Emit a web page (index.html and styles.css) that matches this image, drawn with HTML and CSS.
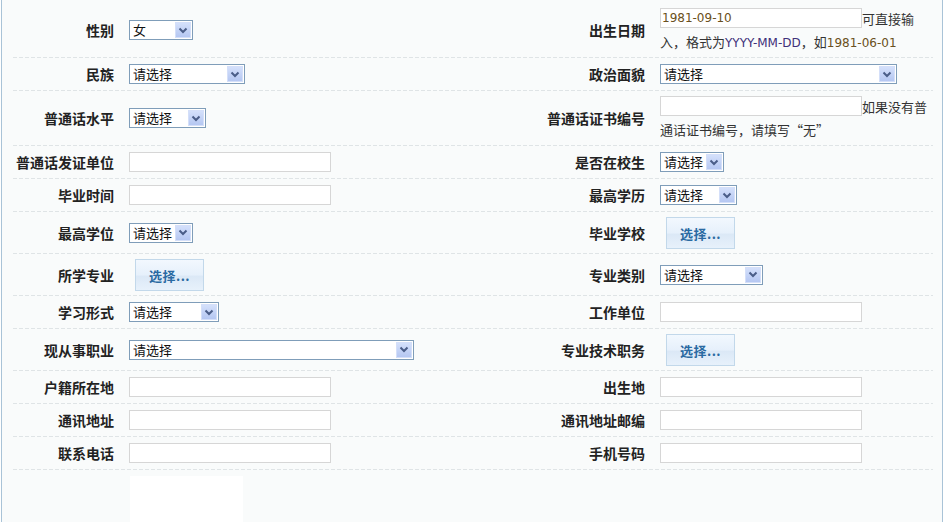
FILE: index.html
```html
<!DOCTYPE html>
<html lang="zh-CN">
<head>
<meta charset="utf-8">
<title>个人信息</title>
<link rel="stylesheet" href="styles.css">
</head>
<body>
<div class="page">
  <div class="form">
    <div class="row">
      <div class="lab">性别</div>
      <div class="fld"><span class="sel w64"><span class="sel-val">女</span><span class="sel-btn"><svg width="10" height="7" viewBox="0 0 10 7"><path d="M1.5 1.5 L5 5 L8.5 1.5" fill="none" stroke="#4a5d88" stroke-width="2"/></svg></span></span></div>
      <div class="lab">出生日期</div>
      <div class="fld hint"><input class="txt date" type="text" value="1981-09-10">可直接输入，格式为<span class="num ym">YYYY-MM-DD</span>，如<span class="num dg">1981-06-01</span></div>
    </div>
    <div class="row">
      <div class="lab">民族</div>
      <div class="fld"><span class="sel w116"><span class="sel-val">请选择</span><span class="sel-btn"><svg width="10" height="7" viewBox="0 0 10 7"><path d="M1.5 1.5 L5 5 L8.5 1.5" fill="none" stroke="#4a5d88" stroke-width="2"/></svg></span></span></div>
      <div class="lab">政治面貌</div>
      <div class="fld"><span class="sel w237"><span class="sel-val">请选择</span><span class="sel-btn"><svg width="10" height="7" viewBox="0 0 10 7"><path d="M1.5 1.5 L5 5 L8.5 1.5" fill="none" stroke="#4a5d88" stroke-width="2"/></svg></span></span></div>
    </div>
    <div class="row">
      <div class="lab">普通话水平</div>
      <div class="fld"><span class="sel w77"><span class="sel-val">请选择</span><span class="sel-btn"><svg width="10" height="7" viewBox="0 0 10 7"><path d="M1.5 1.5 L5 5 L8.5 1.5" fill="none" stroke="#4a5d88" stroke-width="2"/></svg></span></span></div>
      <div class="lab">普通话证书编号</div>
      <div class="fld hint"><input class="txt" type="text" value="">如果没有普通话证书编号，请填写“无”</div>
    </div>
    <div class="row">
      <div class="lab">普通话发证单位</div>
      <div class="fld"><input class="txt" type="text" value=""></div>
      <div class="lab">是否在校生</div>
      <div class="fld"><span class="sel w64"><span class="sel-val">请选择</span><span class="sel-btn"><svg width="10" height="7" viewBox="0 0 10 7"><path d="M1.5 1.5 L5 5 L8.5 1.5" fill="none" stroke="#4a5d88" stroke-width="2"/></svg></span></span></div>
    </div>
    <div class="row">
      <div class="lab">毕业时间</div>
      <div class="fld"><input class="txt" type="text" value=""></div>
      <div class="lab">最高学历</div>
      <div class="fld"><span class="sel w77"><span class="sel-val">请选择</span><span class="sel-btn"><svg width="10" height="7" viewBox="0 0 10 7"><path d="M1.5 1.5 L5 5 L8.5 1.5" fill="none" stroke="#4a5d88" stroke-width="2"/></svg></span></span></div>
    </div>
    <div class="row">
      <div class="lab">最高学位</div>
      <div class="fld"><span class="sel w64"><span class="sel-val">请选择</span><span class="sel-btn"><svg width="10" height="7" viewBox="0 0 10 7"><path d="M1.5 1.5 L5 5 L8.5 1.5" fill="none" stroke="#4a5d88" stroke-width="2"/></svg></span></span></div>
      <div class="lab">毕业学校</div>
      <div class="fld"><span class="btn">选择...</span></div>
    </div>
    <div class="row">
      <div class="lab">所学专业</div>
      <div class="fld"><span class="btn">选择...</span></div>
      <div class="lab">专业类别</div>
      <div class="fld"><span class="sel w103"><span class="sel-val">请选择</span><span class="sel-btn"><svg width="10" height="7" viewBox="0 0 10 7"><path d="M1.5 1.5 L5 5 L8.5 1.5" fill="none" stroke="#4a5d88" stroke-width="2"/></svg></span></span></div>
    </div>
    <div class="row">
      <div class="lab">学习形式</div>
      <div class="fld"><span class="sel w90"><span class="sel-val">请选择</span><span class="sel-btn"><svg width="10" height="7" viewBox="0 0 10 7"><path d="M1.5 1.5 L5 5 L8.5 1.5" fill="none" stroke="#4a5d88" stroke-width="2"/></svg></span></span></div>
      <div class="lab">工作单位</div>
      <div class="fld"><input class="txt" type="text" value=""></div>
    </div>
    <div class="row">
      <div class="lab">现从事职业</div>
      <div class="fld"><span class="sel w285"><span class="sel-val">请选择</span><span class="sel-btn"><svg width="10" height="7" viewBox="0 0 10 7"><path d="M1.5 1.5 L5 5 L8.5 1.5" fill="none" stroke="#4a5d88" stroke-width="2"/></svg></span></span></div>
      <div class="lab">专业技术职务</div>
      <div class="fld"><span class="btn">选择...</span></div>
    </div>
    <div class="row">
      <div class="lab">户籍所在地</div>
      <div class="fld"><input class="txt" type="text" value=""></div>
      <div class="lab">出生地</div>
      <div class="fld"><input class="txt" type="text" value=""></div>
    </div>
    <div class="row">
      <div class="lab">通讯地址</div>
      <div class="fld"><input class="txt" type="text" value=""></div>
      <div class="lab">通讯地址邮编</div>
      <div class="fld"><input class="txt" type="text" value=""></div>
    </div>
    <div class="row">
      <div class="lab">联系电话</div>
      <div class="fld"><input class="txt" type="text" value=""></div>
      <div class="lab">手机号码</div>
      <div class="fld"><input class="txt" type="text" value=""></div>
    </div>
  </div>
  <div class="foot"></div>
</div>
</body>
</html>
```

FILE: styles.css
```css
html, body {
  margin: 0;
  padding: 0;
  background: #ffffff;
}

body {
  font-family: "Noto Sans CJK SC", "Noto Sans", sans-serif;
  font-size: 13px;
  color: #333333;
}

.page {
  margin-left: 1px;
  width: 942px;
  min-height: 522px;
  box-sizing: border-box;
  border-left: 1px solid #a9c3d7;
  border-right: 1px solid #a9c3d7;
  background: #f9fbfb;
  padding: 3px 9px 0 11px;
}

.row {
  display: grid;
  grid-template-columns: 109px 418px 113px 280px;
  padding-bottom: 1px;
  background: repeating-linear-gradient(to right, #dfe4e6 0 4px, transparent 4px 6px) left bottom / 100% 1px no-repeat;
}

.lab {
  display: flex;
  align-items: center;
  justify-content: flex-end;
  padding-right: 8px;
  font-weight: bold;
  font-size: 14px;
  color: #222222;
  white-space: nowrap;
}

.fld {
  display: flex;
  align-items: center;
  min-height: 32px;
  box-sizing: border-box;
  padding: 4px 0 4px 7px;
}

.fld.hint {
  display: block;
  line-height: 23px;
  padding-right: 3px;
}

.txt {
  width: 202px;
  height: 20px;
  box-sizing: border-box;
  margin: 0;
  border: 1px solid #d6d6d6;
  background: #ffffff;
  padding: 0 1px;
  font-family: "DejaVu Sans", sans-serif;
  font-size: 12px;
  color: #222222;
  vertical-align: middle;
  outline: none;
}

.hint .txt {
  vertical-align: top;
  margin-top: 1px;
}

.txt.date {
  color: #6a5020;
}

.num {
  font-family: "DejaVu Sans", sans-serif;
  font-size: 12px;
  line-height: 1;
}

.num.ym {
  color: #40307a;
}

.num.dg {
  color: #6a5020;
}

.sel {
  display: inline-flex;
  align-items: center;
  justify-content: space-between;
  height: 20px;
  box-sizing: border-box;
  border: 1px solid #7f9db9;
  background: #ffffff;
  padding: 0 1px 0 3px;
  line-height: 18px;
  color: #111111;
}

.sel-btn {
  width: 16px;
  height: 16px;
  box-sizing: border-box;
  border: 1px solid #d4dff9;
  background: linear-gradient(#d4e0fb, #b5c7f2);
  display: flex;
  align-items: center;
  justify-content: center;
}

.w64 { width: 64px; }
.w77 { width: 77px; }
.w90 { width: 90px; }
.w103 { width: 103px; }
.w116 { width: 116px; }
.w237 { width: 237px; }
.w285 { width: 285px; }

.btn {
  display: flex;
  align-items: center;
  justify-content: center;
  width: 69px;
  height: 32px;
  margin: 1px 0 0 6px;
  box-sizing: border-box;
  border: 1px solid #c2d8ea;
  background: linear-gradient(#f2f8fe 0%, #e6f0fb 50%, #dbe8f6 54%, #e7f1fb 100%);
  color: #2a6aa2;
  font-weight: bold;
  font-size: 13px;
  letter-spacing: 0.5px;
}

.foot {
  margin: 6px 0 0 117px;
  width: 113px;
  height: 50px;
  background: #ffffff;
}
```
